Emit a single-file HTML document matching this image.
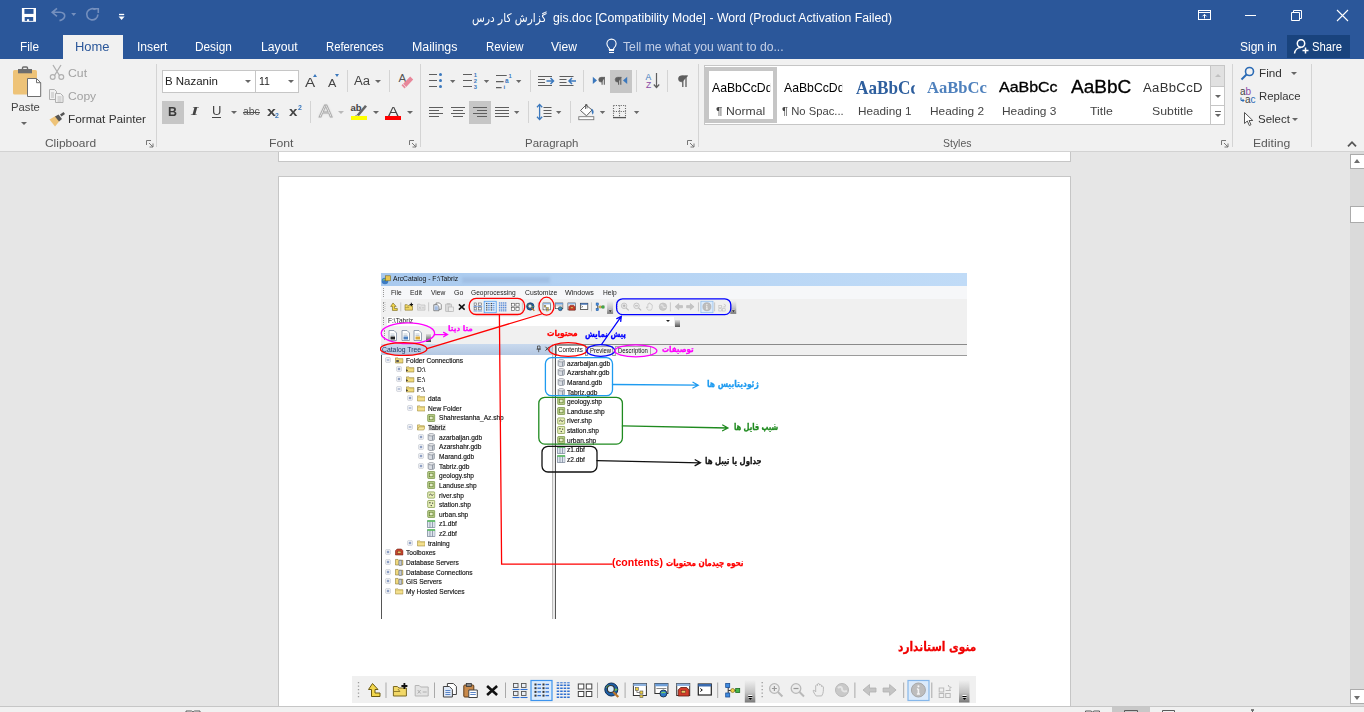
<!DOCTYPE html>
<html lang="en">
<head>
<meta charset="utf-8">
<title>gis.doc - Word</title>
<style>
*{box-sizing:border-box;margin:0;padding:0}
html,body{width:1364px;height:712px;overflow:hidden;background:#e6e6e6}
body{font-family:"Liberation Sans","DejaVu Sans",sans-serif;font-size:12px;color:#444;position:relative}
.abs,.t,.ico{position:absolute}
.t{white-space:nowrap;line-height:1}
#titlebar{position:absolute;left:0;top:0;width:1364px;height:59px;background:#2b579a}
#titlebar .t{color:#fff}
.tab{font-size:12.5px;top:41px}
#hometab{position:absolute;left:63px;top:35px;width:60px;height:25px;background:#f1f1f1}
#ribbon{position:absolute;left:0;top:59px;width:1364px;height:93px;background:#f1f1f1;border-bottom:1px solid #d2d2d2}
.vsep{position:absolute;width:1px;background:#d4d4d4}
.glabel{font-size:11.5px;color:#5a5a5a;top:138px}
.rt{font-size:12.5px;color:#444}
.dis{color:#a2a2a2}
.ac{font-size:6.8px}
.tr{color:#111;-webkit-text-stroke:.15px #111}
.fa{font-family:"DejaVu Sans",sans-serif;font-weight:bold;font-size:8px;-webkit-text-stroke:.3px currentColor}
.caret{position:absolute;width:0;height:0;border-left:3px solid transparent;border-right:3px solid transparent;border-top:3px solid #666}
#docarea{position:absolute;left:0;top:152px;width:1350px;height:554px;background:#e6e6e6;overflow:hidden}
.page{position:absolute;left:278px;width:793px;background:#fff;border:1px solid #c6c6c6}
#vscroll{position:absolute;left:1350px;top:152px;width:14px;height:554px;background:#dadada;overflow:hidden}
#status{position:absolute;left:0;top:706px;width:1364px;height:6px;background:#f1f1f1;border-top:1px solid #c6c6c6}
/*FIT*/
#title{left:553.4px!important;top:11.79px!important;font-size:12.3px!important;transform:scaleX(0.9950);transform-origin:0 0}
#tb_file{left:19.6px!important;top:40.59px!important;font-size:12.3px!important;transform:scaleX(0.9586);transform-origin:0 0}
#tb_home{left:75.4px!important;top:40.59px!important;font-size:12.3px!important;transform:scaleX(1.0516);transform-origin:0 0}
#tb_insert{left:137.2px!important;top:40.59px!important;font-size:12.3px!important;transform:scaleX(0.9851);transform-origin:0 0}
#tb_design{left:195.4px!important;top:40.59px!important;font-size:12.3px!important;transform:scaleX(0.9615);transform-origin:0 0}
#tb_layout{left:260.7px!important;top:40.59px!important;font-size:12.3px!important;transform:scaleX(0.9915);transform-origin:0 0}
#tb_ref{left:325.8px!important;top:40.59px!important;font-size:12.3px!important;transform:scaleX(0.9176);transform-origin:0 0}
#tb_mail{left:411.7px!important;top:40.59px!important;font-size:12.3px!important;transform:scaleX(1.0066);transform-origin:0 0}
#tb_review{left:485.6px!important;top:40.59px!important;font-size:12.3px!important;transform:scaleX(0.9300);transform-origin:0 0}
#tb_view{left:551.3px!important;top:40.59px!important;font-size:12.3px!important;transform:scaleX(0.9837);transform-origin:0 0}
#tb_tell{left:622.9px!important;top:40.59px!important;font-size:12.3px!important;transform:scaleX(0.9914);transform-origin:0 0}
#tb_sign{left:1240.4px!important;top:40.59px!important;font-size:12.3px!important;transform:scaleX(0.9760);transform-origin:0 0}
#tb_share{left:1312.4px!important;top:40.59px!important;font-size:12.3px!important;transform:scaleX(0.9171);transform-origin:0 0}
#t_paste{left:10.7px!important;top:102.21px!important;font-size:11.8px!important;transform:scaleX(0.9566);transform-origin:0 0}
#t_cut{left:68.2px!important;top:68.01px!important;font-size:11.8px!important;transform:scaleX(1.0383);transform-origin:0 0}
#t_copy{left:68.2px!important;top:90.81px!important;font-size:11.8px!important;transform:scaleX(1.0223);transform-origin:0 0}
#t_fp{left:68.2px!important;top:114.11px!important;font-size:11.8px!important;transform:scaleX(1.0004);transform-origin:0 0}
#t_clip{left:44.9px!important;top:138.09px!important;font-size:11px!important;transform:scaleX(1.0849);transform-origin:0 0}
#t_font{left:268.9px!important;top:138.09px!important;font-size:11px!important;transform:scaleX(1.1124);transform-origin:0 0}
#t_para{left:525.0px!important;top:138.09px!important;font-size:11px!important;transform:scaleX(1.0412);transform-origin:0 0}
#t_styles{left:943.0px!important;top:138.09px!important;font-size:11px!important;transform:scaleX(0.9507);transform-origin:0 0}
#t_edit{left:1253.0px!important;top:138.09px!important;font-size:11px!important;transform:scaleX(1.1055);transform-origin:0 0}
#t_fname{left:164.9px!important;top:76.07px!important;font-size:11.5px!important;transform:scaleX(0.9976);transform-origin:0 0}
#t_fsize{left:259.1px!important;top:76.07px!important;font-size:11.5px!important;transform:scaleX(0.9148);transform-origin:0 0}
#t_find{left:1259.1px!important;top:67.81px!important;font-size:11.8px!important;transform:scaleX(0.9917);transform-origin:0 0}
#t_repl{left:1259.1px!important;top:91.11px!important;font-size:11.8px!important;transform:scaleX(0.9599);transform-origin:0 0}
#t_sel{left:1258.4px!important;top:114.01px!important;font-size:11.8px!important;transform:scaleX(0.9715);transform-origin:0 0}
#l1{left:715.9px!important;top:106.17px!important;font-size:11.5px!important;transform:scaleX(1.0602);transform-origin:0 0}
#l2{left:781.9px!important;top:106.17px!important;font-size:11.5px!important;transform:scaleX(0.9787);transform-origin:0 0}
#l3{left:857.9px!important;top:106.17px!important;font-size:11.5px!important;transform:scaleX(1.0209);transform-origin:0 0}
#l4{left:929.9px!important;top:106.17px!important;font-size:11.5px!important;transform:scaleX(1.0324);transform-origin:0 0}
#l5{left:1001.9px!important;top:106.17px!important;font-size:11.5px!important;transform:scaleX(1.0362);transform-origin:0 0}
#l6{left:1089.8px!important;top:106.17px!important;font-size:11.5px!important;transform:scaleX(1.0667);transform-origin:0 0}
#l7{left:1152.4px!important;top:106.17px!important;font-size:11.5px!important;transform:scaleX(1.0698);transform-origin:0 0}
#s4{left:927.2px!important;top:79.98px!important;font-size:16.5px!important;transform:scaleX(1.0049);transform-origin:0 0}
#s5{left:999.0px!important;top:79.50px!important;font-size:14.3px!important;transform:scaleX(1.1169);transform-origin:0 0}
#s6{left:1071.0px!important;top:79.29px!important;font-size:17.5px!important;transform:scaleX(1.0870);transform-origin:0 0}
#s7{left:1143.2px!important;top:81.69px!important;font-size:12.3px!important;transform:scaleX(1.0662);transform-origin:0 0}
#title_fa{left:471.9px!important;top:12.05px!important;font-size:12px!important;transform:scaleX(0.8805);transform-origin:0 0}
#ac_title{left:392.9px!important;top:123.84px!important;font-size:6.8px!important;transform:scaleX(0.9921);transform-origin:0 0}
#ac_m0{left:390.8px!important;top:137.47px!important;font-size:7px!important;transform:scaleX(0.9423);transform-origin:0 0}
#ac_m1{left:410.1px!important;top:137.47px!important;font-size:7px!important;transform:scaleX(0.9807);transform-origin:0 0}
#ac_m2{left:430.6px!important;top:137.47px!important;font-size:7px!important;transform:scaleX(0.9524);transform-origin:0 0}
#ac_m3{left:453.6px!important;top:137.47px!important;font-size:7px!important;transform:scaleX(0.9985);transform-origin:0 0}
#ac_m4{left:471.4px!important;top:137.47px!important;font-size:7px!important;transform:scaleX(0.9477);transform-origin:0 0}
#ac_m5{left:524.6px!important;top:137.47px!important;font-size:7px!important;transform:scaleX(0.9744);transform-origin:0 0}
#ac_m6{left:565.4px!important;top:137.47px!important;font-size:7px!important;transform:scaleX(1.0184);transform-origin:0 0}
#ac_m7{left:602.6px!important;top:137.47px!important;font-size:7px!important;transform:scaleX(0.9461);transform-origin:0 0}
#ac_addr{left:387.7px!important;top:165.64px!important;font-size:6.8px!important;transform:scaleX(0.9635);transform-origin:0 0}
#ac_ct{left:382.2px!important;top:193.57px!important;font-size:7px!important;transform:scaleX(0.9735);transform-origin:0 0}
#ac_t1{left:558.3px!important;top:195.01px!important;font-size:6.6px!important;transform:scaleX(0.9389);transform-origin:0 0}
#ac_t2{left:589.5px!important;top:196.11px!important;font-size:6.6px!important;transform:scaleX(0.8994);transform-origin:0 0}
#ac_t3{left:617.7px!important;top:196.11px!important;font-size:6.6px!important;transform:scaleX(0.9033);transform-origin:0 0}
#tr0{left:406.1px!important;top:204.67px!important;font-size:7px!important;transform:scaleX(0.9400);transform-origin:0 0}
#tr1{left:416.9px!important;top:214.31px!important;font-size:7px!important;transform:scaleX(0.9400);transform-origin:0 0}
#tr2{left:416.9px!important;top:223.94px!important;font-size:7px!important;transform:scaleX(0.9400);transform-origin:0 0}
#tr3{left:416.9px!important;top:233.57px!important;font-size:7px!important;transform:scaleX(0.9400);transform-origin:0 0}
#tr4{left:427.8px!important;top:243.21px!important;font-size:7px!important;transform:scaleX(0.9400);transform-origin:0 0}
#tr5{left:427.8px!important;top:252.84px!important;font-size:7px!important;transform:scaleX(0.9400);transform-origin:0 0}
#tr6{left:438.5px!important;top:262.47px!important;font-size:7px!important;transform:scaleX(0.9400);transform-origin:0 0}
#tr7{left:427.8px!important;top:272.11px!important;font-size:7px!important;transform:scaleX(0.9400);transform-origin:0 0}
#tr8{left:438.5px!important;top:281.74px!important;font-size:7px!important;transform:scaleX(0.9400);transform-origin:0 0}
#tr9{left:438.5px!important;top:291.37px!important;font-size:7px!important;transform:scaleX(0.9400);transform-origin:0 0}
#tr10{left:438.5px!important;top:301.00px!important;font-size:7px!important;transform:scaleX(0.9400);transform-origin:0 0}
#tr11{left:438.5px!important;top:310.64px!important;font-size:7px!important;transform:scaleX(0.9400);transform-origin:0 0}
#tr12{left:438.5px!important;top:320.27px!important;font-size:7px!important;transform:scaleX(0.9400);transform-origin:0 0}
#tr13{left:438.5px!important;top:329.90px!important;font-size:7px!important;transform:scaleX(0.9400);transform-origin:0 0}
#tr14{left:438.5px!important;top:339.54px!important;font-size:7px!important;transform:scaleX(0.9400);transform-origin:0 0}
#tr15{left:438.5px!important;top:349.17px!important;font-size:7px!important;transform:scaleX(0.9400);transform-origin:0 0}
#tr16{left:438.5px!important;top:358.80px!important;font-size:7px!important;transform:scaleX(0.9400);transform-origin:0 0}
#tr17{left:438.5px!important;top:368.44px!important;font-size:7px!important;transform:scaleX(0.9400);transform-origin:0 0}
#tr18{left:438.5px!important;top:378.07px!important;font-size:7px!important;transform:scaleX(0.9400);transform-origin:0 0}
#tr19{left:427.8px!important;top:387.70px!important;font-size:7px!important;transform:scaleX(0.9400);transform-origin:0 0}
#tr20{left:406.1px!important;top:397.33px!important;font-size:7px!important;transform:scaleX(0.9400);transform-origin:0 0}
#tr21{left:406.1px!important;top:406.97px!important;font-size:7px!important;transform:scaleX(0.9400);transform-origin:0 0}
#tr22{left:406.1px!important;top:416.60px!important;font-size:7px!important;transform:scaleX(0.9400);transform-origin:0 0}
#tr23{left:406.1px!important;top:426.23px!important;font-size:7px!important;transform:scaleX(0.9400);transform-origin:0 0}
#tr24{left:406.1px!important;top:435.87px!important;font-size:7px!important;transform:scaleX(0.9400);transform-origin:0 0}
#ls0{left:566.6px!important;top:207.67px!important;font-size:7px!important;transform:scaleX(0.9400);transform-origin:0 0}
#ls1{left:566.6px!important;top:217.31px!important;font-size:7px!important;transform:scaleX(0.9400);transform-origin:0 0}
#ls2{left:566.6px!important;top:226.94px!important;font-size:7px!important;transform:scaleX(0.9400);transform-origin:0 0}
#ls3{left:566.6px!important;top:236.57px!important;font-size:7px!important;transform:scaleX(0.9400);transform-origin:0 0}
#ls4{left:566.6px!important;top:246.21px!important;font-size:7px!important;transform:scaleX(0.9400);transform-origin:0 0}
#ls5{left:566.6px!important;top:255.84px!important;font-size:7px!important;transform:scaleX(0.9400);transform-origin:0 0}
#ls6{left:566.6px!important;top:265.47px!important;font-size:7px!important;transform:scaleX(0.9400);transform-origin:0 0}
#ls7{left:566.6px!important;top:275.11px!important;font-size:7px!important;transform:scaleX(0.9400);transform-origin:0 0}
#ls8{left:566.6px!important;top:284.74px!important;font-size:7px!important;transform:scaleX(0.9400);transform-origin:0 0}
#ls9{left:566.6px!important;top:294.37px!important;font-size:7px!important;transform:scaleX(0.9400);transform-origin:0 0}
#ls10{left:566.6px!important;top:304.00px!important;font-size:7px!important;transform:scaleX(0.9400);transform-origin:0 0}
#an_meta{left:448.0px!important;top:173.35px!important;font-size:7.5px!important;transform:scaleX(0.9684);transform-origin:0 0}
#an_moh{left:546.6px!important;top:178.43px!important;font-size:8px!important;transform:scaleX(0.9296);transform-origin:0 0}
#an_pish{left:585.0px!important;top:178.01px!important;font-size:8.5px!important;transform:scaleX(0.8391);transform-origin:0 0}
#an_tos{left:661.6px!important;top:194.23px!important;font-size:8px!important;transform:scaleX(0.8853);transform-origin:0 0}
#an_geo{left:706.5px!important;top:228.39px!important;font-size:9px!important;transform:scaleX(0.8384);transform-origin:0 0}
#an_shp{left:733.5px!important;top:270.79px!important;font-size:9px!important;transform:scaleX(0.7541);transform-origin:0 0}
#an_jad{left:704.8px!important;top:305.39px!important;font-size:9px!important;transform:scaleX(0.7771);transform-origin:0 0}
#an_nah{left:665.8px!important;top:406.79px!important;font-size:9px!important;transform:scaleX(0.8052);transform-origin:0 0}
#an_cont{left:611.5px!important;top:405.88px!important;font-size:10.3px!important;transform:scaleX(1.0233);transform-origin:0 0}
#an_head{left:898.1px!important;top:489.42px!important;font-size:12.5px!important;transform:scaleX(0.8441);transform-origin:0 0}
#f_growA{left:304.7px!important;top:75.96px!important;font-size:13.4px!important;transform:scaleX(1.1419);transform-origin:0 0}
#f_shrA{left:327.8px!important;top:78.41px!important;font-size:10.5px!important;transform:scaleX(1.1895);transform-origin:0 0}
#f_Aa{left:354.4px!important;top:74.84px!important;font-size:12px!important;transform:scaleX(1.0948);transform-origin:0 0}
#f_fx{left:319.2px!important;top:103.75px!important;font-size:16.6px!important;transform:scaleX(1.2000);transform-origin:0 0}
#f_colA{left:387.9px!important;top:105.06px!important;font-size:13.4px!important;transform:scaleX(1.1867);transform-origin:0 0}
#f_B{left:167.8px!important;top:105.64px!important;font-size:12px!important;transform:scaleX(1.0355);transform-origin:0 0}
#f_I{left:190.7px!important;top:104.49px!important;font-size:13.5px!important;transform:scaleX(1.4082);transform-origin:0 0}
#f_U{left:211.8px!important;top:105.22px!important;font-size:12.5px!important;transform:scaleX(1.0436);transform-origin:0 0}
#f_abc{left:242.6px!important;top:106.32px!important;font-size:11.2px!important;transform:scaleX(0.9314);transform-origin:0 0}
#f_x1{left:266.5px!important;top:104.80px!important;font-size:13px!important;transform:scaleX(1.2261);transform-origin:0 0}
#f_x2{left:288.5px!important;top:104.80px!important;font-size:13px!important;transform:scaleX(1.1570);transform-origin:0 0}
#f_sub2{left:275.4px!important;top:113.10px!important;font-size:6.5px!important;transform:scaleX(1.0717);transform-origin:0 0}
#f_sup2{left:297.6px!important;top:105.20px!important;font-size:6.5px!important;transform:scaleX(1.0717);transform-origin:0 0}
/*ENDFIT*/
</style>
</head>
<body>
<!-- TITLE BAR -->
<div id="titlebar">
  <div class="t" id="title_fa" dir="rtl" style="left:472px;top:10px;font-size:12px;font-family:'DejaVu Sans',sans-serif">گزارش کار درس</div>
  <div class="t" id="title" style="left:554px;top:10px;font-size:13px">gis.doc [Compatibility Mode] - Word (Product Activation Failed)</div>

  <div class="abs" style="left:1287px;top:35px;width:63px;height:23px;background:#19437d"></div>
  <!-- QAT icons -->
  <svg class="ico" style="left:20px;top:6px" width="110" height="18" viewBox="20 6 110 18" fill="none">
    <rect x="21.900" y="8" width="14.100" height="13.800" fill="#fff"/><rect x="24.400" y="9" width="9.100" height="4.900" fill="#2b579a"/><rect x="24.700" y="17" width="8.500" height="3.900" fill="#2b579a"/><rect x="27" y="19.200" width="2.100" height="2" fill="#fff"/>
    <path d="M57 8.300L52.200 12.300L57 16.300M52.500 12.300H60C63.500 12.300 65.200 14.500 64.600 16.700C64 18.800 62 20 59.500 20.600" stroke="#7590be" stroke-width="1.600"/>
    <path d="M71.200 13h5l-2.500 2.900z" fill="#7590be"/>
    <path d="M95.500 9.700A5.600 5.600 0 1 0 97.900 14.500" stroke="#7590be" stroke-width="1.600"/><path d="M93 8.800H98.300V13" stroke="#7590be" stroke-width="1.600"/>
    <path d="M119 14.500h5.200" stroke="#fff" stroke-width="1.300"/><path d="M118.600 16.600h6l-3 3.400z" fill="#fff"/>
  </svg>
  <!-- window controls -->
  <svg class="ico" style="left:1197px;top:8px" width="15" height="13" viewBox="0 0 15 13"><rect x="1.500" y="2.500" width="12" height="9" fill="none" stroke="#fff" stroke-width="1"/><path d="M1.500 4.500h12" stroke="#fff" stroke-width="1"/><path d="M7.500 10.500V6.500M5.500 8.300l2-2 2 2" fill="none" stroke="#fff" stroke-width="1"/></svg>
  <div class="abs" style="left:1245px;top:15px;width:11px;height:1px;background:#fff"></div>
  <svg class="ico" style="left:1290px;top:9px" width="13" height="13" viewBox="0 0 13 13"><path d="M1.5 3.5h8v8h-8z" fill="none" stroke="#fff" stroke-width="1"/><path d="M3.5 3.5v-2h8v8h-2" fill="none" stroke="#fff" stroke-width="1"/></svg>
  <svg class="ico" style="left:1336px;top:9px" width="13" height="13" viewBox="0 0 13 13"><path d="M1 1l11 11M12 1L1 12" fill="none" stroke="#fff" stroke-width="1.1"/></svg>
  <!-- lightbulb + share icon -->
  <svg class="ico" style="left:605px;top:37px" width="13" height="17" viewBox="605 37 13 17" fill="none"><path d="M609.300 49.500v-1.200c-1.500-1.300-2.400-2.700-2.400-4.600a4.600 4.600 0 0 1 9.200 0c0 1.900-.9 3.300-2.400 4.600v1.200z" stroke="#fff" stroke-width="1.100"/><rect x="609" y="49" width="5" height="2" fill="#fff"/><path d="M609 52.500h5" stroke="#fff" stroke-width="1.100"/></svg>
  <svg class="ico" style="left:1293px;top:38px" width="17" height="17" viewBox="0 0 17 17"><circle cx="8" cy="5.500" r="3.700" fill="none" stroke="#fff" stroke-width="1.500"/><path d="M1.500 15.500c.5-4 3.500-6 6.500-6" fill="none" stroke="#fff" stroke-width="1.500"/><path d="M9.500 12.500h6M12.500 9.500v6" stroke="#fff" stroke-width="1.500"/></svg>
  <div class="t tab" id="tb_file" style="left:20px">File</div>
  <div id="hometab"></div>
  <div class="t tab" id="tb_home" style="left:76px;color:#2b579a">Home</div>
  <div class="t tab" id="tb_insert" style="left:138px">Insert</div>
  <div class="t tab" id="tb_design" style="left:196px">Design</div>
  <div class="t tab" id="tb_layout" style="left:261px">Layout</div>
  <div class="t tab" id="tb_ref" style="left:326px">References</div>
  <div class="t tab" id="tb_mail" style="left:412px">Mailings</div>
  <div class="t tab" id="tb_review" style="left:486px">Review</div>
  <div class="t tab" id="tb_view" style="left:552px">View</div>
  <div class="t tab" id="tb_tell" style="left:623px;color:#c2cee5">Tell me what you want to do...</div>
  <div class="t tab" id="tb_sign" style="left:1240px">Sign in</div>
  <div class="t tab" id="tb_share" style="left:1312px">Share</div>
</div>
<!-- RIBBON -->
<div id="ribbon"></div>
<!-- ===== Clipboard group ===== -->
<svg class="ico" style="left:12px;top:66px" width="30" height="32" viewBox="0 0 30 32">
  <rect x="1" y="4" width="24" height="24.500" rx="1.500" fill="#eec378"/>
  <rect x="6" y="3" width="14" height="4.300" fill="#6e6e6e"/><rect x="10.500" y="1" width="5" height="4" rx="1" fill="none" stroke="#6e6e6e" stroke-width="1.400"/>
  <path d="M15.500 12.500h9l4.200 4.200v13.800h-13.200z" fill="#fff" stroke="#6e6e6e" stroke-width="1"/><path d="M24.500 12.500v4.200h4.200" fill="none" stroke="#6e6e6e" stroke-width="1"/>
</svg>
<div class="t rt" id="t_paste" style="left:11px;top:102px">Paste</div>
<div class="caret" style="left:21px;top:122px"></div>
<svg class="ico" style="left:49px;top:64px" width="16" height="17" viewBox="0 0 16 17"><path d="M4 1l6.500 10.500M12 1L5.500 11.500" stroke="#b0b0b0" stroke-width="1.300" fill="none"/><circle cx="3.700" cy="13" r="2.400" fill="none" stroke="#b0b0b0" stroke-width="1.200"/><circle cx="12.300" cy="13" r="2.400" fill="none" stroke="#b0b0b0" stroke-width="1.200"/></svg>
<div class="t rt dis" id="t_cut" style="left:68px;top:68px">Cut</div>
<svg class="ico" style="left:48px;top:88px" width="17" height="16" viewBox="0 0 17 16"><path d="M1.500 1.500h5l2 2v8h-7z" fill="#f1f1f1" stroke="#b0b0b0" stroke-width="1"/><path d="M3 5h3M3 7h3M3 9h3" stroke="#b0b0b0" stroke-width=".8"/><path d="M7.500 5.500h5l2.500 2.500v6.500h-7.500z" fill="#f1f1f1" stroke="#b0b0b0" stroke-width="1"/><path d="M9.500 9h4M9.500 11h4M9.500 13h4" stroke="#b0b0b0" stroke-width=".8"/></svg>
<div class="t rt dis" id="t_copy" style="left:68px;top:91px">Copy</div>
<svg class="ico" style="left:48px;top:111px" width="18" height="16" viewBox="0 0 18 16"><path d="M1.500 8.500l6-3.500 4 5-4.500 5.500z" fill="#eec378"/><path d="M7 5.500l3.500-2 3.500 4.500-3 2.500z" fill="#555"/><path d="M12 3.500l3.500-2.500 1.500 2-3.500 2.500z" fill="#555"/></svg>
<div class="t rt" id="t_fp" style="left:68px;top:114px;color:#333">Format Painter</div>
<div class="t glabel" id="t_clip" style="left:45px">Clipboard</div>
<svg class="ico launcher" style="left:146px;top:140px" width="8" height="8" viewBox="0 0 8 8"><path d="M.500 5V.500H5" fill="none" stroke="#777" stroke-width="1"/><path d="M3 3l4 4M7 3.500V7H3.500" fill="none" stroke="#777" stroke-width="1"/></svg>
<div class="vsep" style="left:156px;top:64px;height:83px"></div>

<!-- ===== Font group ===== -->
<div class="abs" style="left:162px;top:70px;width:94px;height:23px;background:#fff;border:1px solid #c6c6c6"></div>
<div class="abs" style="left:255px;top:70px;width:44px;height:23px;background:#fff;border:1px solid #c6c6c6"></div>
<div class="t rt" id="t_fname" style="left:165px;top:75px;color:#222">B Nazanin</div>
<div class="caret" style="left:245px;top:80px"></div>
<div class="t rt" id="t_fsize" style="left:259px;top:75px;color:#222">11</div>
<div class="caret" style="left:288px;top:80px"></div>
<div class="t" id="f_growA" style="color:#444">A</div>
<div class="abs" style="left:313px;top:74px;width:0;height:0;border-left:2.600px solid transparent;border-right:2.600px solid transparent;border-bottom:3px solid #3b78bd"></div>
<div class="t" id="f_shrA" style="color:#444">A</div>
<div class="abs" style="left:335px;top:74px;width:0;height:0;border-left:2.600px solid transparent;border-right:2.600px solid transparent;border-top:3px solid #3b78bd"></div>
<div class="vsep" style="left:347px;top:70px;height:22px"></div>
<div class="t" id="f_Aa" style="color:#444">Aa</div>
<div class="caret" style="left:374.500px;top:80px"></div>
<div class="vsep" style="left:389px;top:70px;height:22px"></div>
<svg class="ico" style="left:397px;top:71px" width="18" height="19" viewBox="0 0 18 19"><text x="1.500" y="11" font-size="11.500" font-family="Liberation Sans" fill="#555">A</text><path d="M6.200 12.700l7-7.300 3 3.200-7 7.300z" fill="#e8879a"/><path d="M4.500 14.300l1.200-1.200 3 3.200-1.200 1.200z" fill="#e8879a"/></svg>

<div class="abs" style="left:162px;top:101px;width:22px;height:23px;background:#c6c6c6"></div>
<div class="t" id="f_B" style="font-weight:bold;color:#3a3a3a">B</div>
<div class="t" id="f_I" style="font-style:italic;font-weight:bold;font-family:'Liberation Serif',serif;color:#444">I</div>
<div class="t" id="f_U" style="color:#444">U</div>
<div class="abs" style="left:212px;top:117px;width:9px;height:1.200px;background:#444"></div>
<div class="caret" style="left:230.600px;top:111px"></div>
<div class="t" id="f_abc" style="color:#555">abc</div>
<div class="abs" style="left:242.500px;top:112px;width:17.500px;height:1px;background:#555"></div>
<div class="t" id="f_x1" style="font-weight:bold;color:#444">x</div><div class="t" id="f_sub2" style="font-weight:bold;color:#3b78bd">2</div>
<div class="t" id="f_x2" style="font-weight:bold;color:#444">x</div><div class="t" id="f_sup2" style="font-weight:bold;color:#3b78bd">2</div>
<div class="vsep" style="left:310px;top:101px;height:22px"></div>
<div class="t" id="f_fx" style="color:#fff;-webkit-text-stroke:.8px #aaa;text-shadow:0 0 2px #c4c4c4">A</div>
<div class="caret" style="left:337.500px;top:111px;border-top-color:#b9b9b9"></div>
<svg class="ico" style="left:350px;top:103px" width="19" height="18" viewBox="0 0 19 18"><text x="0.500" y="8.200" font-size="9.500" font-weight="bold" font-family="Liberation Sans" fill="#444">ab</text><path d="M15 2l2 1.500-8 9.500-2.500-1z" fill="#666"/><path d="M6 12l-1.500 2 3-.5z" fill="#666"/><rect x="1" y="13" width="16" height="4" fill="#ffff00"/></svg>
<div class="caret" style="left:372.500px;top:111px"></div>
<div class="t" id="f_colA" style="color:#444">A</div>
<div class="abs" style="left:385px;top:116px;width:16px;height:4px;background:#ff0000"></div>
<div class="caret" style="left:406.500px;top:111px"></div>
<div class="t glabel" id="t_font" style="left:269px">Font</div>
<svg class="ico launcher" style="left:409px;top:140px" width="8" height="8" viewBox="0 0 8 8"><path d="M.500 5V.500H5" fill="none" stroke="#777" stroke-width="1"/><path d="M3 3l4 4M7 3.500V7H3.500" fill="none" stroke="#777" stroke-width="1"/></svg>
<div class="vsep" style="left:420px;top:64px;height:83px"></div>

<!-- ===== Paragraph group ===== -->
<div class="abs" style="left:610px;top:70px;width:22px;height:23px;background:#c6c6c6"></div>
<div class="abs" style="left:469px;top:101px;width:22px;height:23px;background:#c6c6c6"></div>
<svg class="ico" style="left:420px;top:64px" width="280" height="64" viewBox="420 64 280 64" fill="none">
<path d="M429 74.500h8M429 80.500h8M429 86.500h8" stroke="#5e5e5e" stroke-width="1.200"/><circle cx="440.500" cy="74.500" r="1.500" fill="#3b78bd"/><circle cx="440.500" cy="80.500" r="1.500" fill="#3b78bd"/><circle cx="440.500" cy="86.500" r="1.500" fill="#3b78bd"/>
<path d="M450 80h5.400l-2.700 3z" fill="#6a6a6a"/>
<path d="M463 74.500h9M463 80.500h9M463 86.500h9" stroke="#5e5e5e" stroke-width="1.200"/>
<text x="473.700" y="77" font-size="5.800" font-weight="bold" font-family="Liberation Sans" fill="#3b78bd">1</text><text x="473.700" y="83" font-size="5.800" font-weight="bold" font-family="Liberation Sans" fill="#3b78bd">2</text><text x="473.700" y="89" font-size="5.800" font-weight="bold" font-family="Liberation Sans" fill="#3b78bd">3</text>
<path d="M483.8 80h5.400l-2.700 3z" fill="#6a6a6a"/>
<path d="M496 75.500h10.700M496 81.600h7.600M496 87.600h5.600" stroke="#5e5e5e" stroke-width="1.200"/>
<text x="508.600" y="77.500" font-size="5.800" font-weight="bold" font-family="Liberation Sans" fill="#3b78bd">1</text><text x="505" y="83.300" font-size="6.500" font-weight="bold" font-family="Liberation Sans" fill="#3b78bd">a</text><text x="503.600" y="89.300" font-size="6" font-weight="bold" font-family="Liberation Sans" fill="#3b78bd">i</text>
<path d="M516 80h5.400l-2.700 3z" fill="#6a6a6a"/>
<path d="M530.500 70V92" stroke="#d4d4d4"/>
<path d="M538 76.500h14M538 79.500h7M538 82.500h7M538 85.500h14" stroke="#5e5e5e" stroke-width="1.200"/><path d="M546.500 81h7M550.500 78l3 3-3 3" stroke="#3b78bd" stroke-width="1.500"/>
<path d="M559.500 76.500h14M559.500 79.500h7M559.500 82.500h7M559.500 85.500h14" stroke="#5e5e5e" stroke-width="1.200"/><path d="M576 81h-7M572 78l-3 3 3 3" stroke="#3b78bd" stroke-width="1.500"/>
<path d="M583.500 70V92" stroke="#d4d4d4"/>
<path d="M592.800 76.800l4.200 3.600-4.200 3.600z" fill="#3b78bd"/><path d="M605.0 77.3H601.1a2.400 2.400 0 0 0 0 4.800H601.9" fill="#5e5e5e" stroke="#5e5e5e" stroke-width=".6"/><path d="M602.1 77.3V84.7M604.3 77.3V84.7" stroke="#5e5e5e" stroke-width="1.100"/>
<path d="M621.5 77.3H617.6a2.400 2.400 0 0 0 0 4.800H618.4" fill="#5e5e5e" stroke="#5e5e5e" stroke-width=".6"/><path d="M618.6 77.3V84.7M620.8 77.3V84.7" stroke="#5e5e5e" stroke-width="1.100"/><path d="M627.200 76.800l-4.200 3.600 4.200 3.600z" fill="#3b78bd"/>
<path d="M636.500 70V92" stroke="#d4d4d4"/>
<text x="645.600" y="79.500" font-size="8.600" font-family="Liberation Sans" fill="#3b78bd">A</text><text x="645.900" y="87.800" font-size="8.600" font-family="Liberation Sans" fill="#8a4aa5">Z</text>
<path d="M656.500 73V87.500M653.800 84.500l2.700 3 2.700-3" stroke="#5e5e5e" stroke-width="1.200"/>
<path d="M667.500 70V92" stroke="#d4d4d4"/>
<path d="M688 75.800H681.500a3 3 0 0 0 0 6H682.500" fill="#5e5e5e" stroke="#5e5e5e" stroke-width=".7"/><path d="M682.800 75.800V87M686 75.800V87" stroke="#5e5e5e" stroke-width="1.300"/>

<path d="M429 107.500h14M429 110.500h10M429 113.500h14M429 116.500h10" stroke="#5e5e5e" stroke-width="1.200"/>
<path d="M451 107.500h14M453 110.500h10M451 113.500h14M453 116.500h10" stroke="#5e5e5e" stroke-width="1.200"/>
<path d="M473 107.500h14M477 110.500h10M473 113.500h14M477 116.500h10" stroke="#5e5e5e" stroke-width="1.200"/>
<path d="M495 107.500h14M495 110.500h14M495 113.500h14M495 116.500h14" stroke="#5e5e5e" stroke-width="1.200"/>
<path d="M514 111h5.400l-2.700 3z" fill="#6a6a6a"/>
<path d="M528.500 101V123" stroke="#d4d4d4"/>
<path d="M539.600 104.500V119.500M537 107.200l2.600-2.800 2.600 2.800M537 116.800l2.600 2.800 2.600-2.800" stroke="#3b78bd" stroke-width="1.300"/>
<path d="M543.500 107.500h8M543.500 110.500h8M543.500 113.500h8M543.500 116.500h8" stroke="#5e5e5e" stroke-width="1.200"/>
<path d="M556 111h5.400l-2.700 3z" fill="#6a6a6a"/>
<path d="M570.500 101V123" stroke="#d4d4d4"/>
<path d="M580.500 110.500l5.500-5.500 6 5-5.500 5.800z" fill="#fff" stroke="#5e5e5e" stroke-width="1"/><path d="M585.500 109v-4.500h1.500v4" stroke="#5e5e5e" stroke-width=".9"/><path d="M591.500 108.500c2.200 1 2.800 3.500 1.300 6.300-1-1.800-1.500-3.800-1.300-6.300z" fill="#3b78bd"/>
<rect x="578.800" y="116.700" width="15" height="3" fill="#fff" stroke="#777" stroke-width=".9"/>
<path d="M599.8 111h5.400l-2.700 3z" fill="#6a6a6a"/>
<path d="M613.500 105.500h12.500M613.500 111.500h12.500M613.500 105.500v12M619.500 105.500v12M625.500 105.500v12" stroke="#666" stroke-width="1.100" stroke-dasharray="1.100 1.300"/><path d="M613 117.600h13" stroke="#555" stroke-width="1.300"/>
<path d="M633.9 111h5.400l-2.700 3z" fill="#6a6a6a"/>
</svg>
<div class="t glabel" id="t_para" style="left:525px">Paragraph</div>
<svg class="ico launcher" style="left:687px;top:140px" width="8" height="8" viewBox="0 0 8 8"><path d="M.500 5V.500H5" fill="none" stroke="#777" stroke-width="1"/><path d="M3 3l4 4M7 3.500V7H3.500" fill="none" stroke="#777" stroke-width="1"/></svg>
<div class="vsep" style="left:698px;top:64px;height:83px"></div>

<!-- ===== Styles group ===== -->
<div class="abs" style="left:704px;top:65px;width:521px;height:60px;background:#fff;border:1px solid #c6c6c6"></div>
<div class="abs" style="left:705px;top:67px;width:72px;height:56px;border:4px solid #c6c6c6;background:#fff"></div>
<div class="t sty" id="s1" style="left:711.9px;top:81.77px;font-size:12.2px;color:#000;width:58.3px;height:16px;overflow:hidden;transform:scaleX(1.003);transform-origin:0 0">AaBbCcDdEe</div>
<div class="t sty" id="s2" style="left:783.8px;top:81.77px;font-size:12.2px;color:#000;width:58.3px;height:16px;overflow:hidden;transform:scaleX(1.003);transform-origin:0 0">AaBbCcDdEe</div>
<div class="t sty" id="s3" style="left:855.7px;top:78.19px;font-size:19px;font-weight:bold;color:#2e5f9e;font-family:'Liberation Serif',serif;width:64.8px;height:24px;overflow:hidden;transform:scaleX(0.9038);transform-origin:0 0">AaBbCcD</div>
<div class="t sty" id="s4" style="left:927px;top:79px;font-size:16.500px;font-weight:bold;color:#4f81bd;font-family:'Liberation Serif',serif;width:63px;overflow:hidden">AaBbCc</div>
<div class="t sty" id="s5" style="left:999px;top:78px;font-size:15.500px;color:#000;-webkit-text-stroke:.3px #000">AaBbCc</div>
<div class="t sty" id="s6" style="left:1071px;top:76px;font-size:19px;color:#000;-webkit-text-stroke:.3px #000">AaBbC</div>
<div class="t sty" id="s7" style="left:1143px;top:79px;font-size:14.500px;color:#333;letter-spacing:.3px">AaBbCcD</div>
<div class="t rt lab" id="l1" style="left:716px;top:105px">¶ Normal</div>
<div class="t rt lab" id="l2" style="left:781px;top:105px">¶ No Spac...</div>
<div class="t rt lab" id="l3" style="left:857px;top:105px">Heading 1</div>
<div class="t rt lab" id="l4" style="left:929px;top:105px">Heading 2</div>
<div class="t rt lab" id="l5" style="left:1001px;top:105px">Heading 3</div>
<div class="t rt lab" id="l6" style="left:1089px;top:105px">Title</div>
<div class="t rt lab" id="l7" style="left:1152px;top:105px">Subtitle</div>
<div class="abs" style="left:1210px;top:66px;width:14px;height:58px;background:#fff;border-left:1px solid #c6c6c6"></div>
<div class="abs" style="left:1210px;top:66px;width:14px;height:21px;background:#e1e1e1;border-left:1px solid #c6c6c6;border-bottom:1px solid #c6c6c6"></div>
<div class="abs" style="left:1210px;top:105px;width:14px;height:1px;background:#c6c6c6"></div>
<div class="abs" style="left:1215px;top:74px;width:0;height:0;border-left:3px solid transparent;border-right:3px solid transparent;border-bottom:3px solid #c0c0c0"></div>
<div class="caret" style="left:1215px;top:95px"></div>
<div class="abs" style="left:1215px;top:111px;width:6px;height:1px;background:#666"></div>
<div class="caret" style="left:1215px;top:114px"></div>
<div class="t glabel" id="t_styles" style="left:943px">Styles</div>
<svg class="ico launcher" style="left:1221px;top:140px" width="8" height="8" viewBox="0 0 8 8"><path d="M.500 5V.500H5" fill="none" stroke="#777" stroke-width="1"/><path d="M3 3l4 4M7 3.500V7H3.500" fill="none" stroke="#777" stroke-width="1"/></svg>
<div class="vsep" style="left:1232px;top:64px;height:83px"></div>

<!-- ===== Editing group ===== -->
<svg class="ico" style="left:1240px;top:66px" width="16" height="16" viewBox="0 0 16 16"><circle cx="9.500" cy="5.500" r="4" fill="none" stroke="#2b6bb5" stroke-width="1.600"/><path d="M6.500 8.500L1.500 13.500" stroke="#2b6bb5" stroke-width="2"/></svg>
<div class="t rt" id="t_find" style="left:1259px;top:68px;color:#333">Find</div>
<div class="caret" style="left:1291px;top:72px"></div>
<svg class="ico" style="left:1239px;top:87px" width="19" height="18" viewBox="0 0 19 18"><text x="1" y="8" font-size="10" font-family="Liberation Sans" fill="#444">a</text><text x="6.500" y="8" font-size="10" font-family="Liberation Sans" fill="#8a4aa5">b</text><text x="6" y="16" font-size="10" font-family="Liberation Sans" fill="#444">a</text><text x="11.500" y="16" font-size="10" font-family="Liberation Sans" fill="#2b6bb5">c</text><path d="M2 10.500v3h3M3.500 12l1.500 1.500-1.500 1.500" stroke="#2b6bb5" stroke-width="1" fill="none"/></svg>
<div class="t rt" id="t_repl" style="left:1259px;top:91px;color:#333">Replace</div>
<svg class="ico" style="left:1243px;top:111px" width="12" height="16" viewBox="0 0 12 16"><path d="M1.500 1.500v11l2.800-2.500 2 4.500 1.700-.800-2-4.200h3.800z" fill="#fff" stroke="#555" stroke-width="1"/></svg>
<div class="t rt" id="t_sel" style="left:1259px;top:114px;color:#333">Select</div>
<div class="caret" style="left:1292px;top:118px"></div>
<div class="t glabel" id="t_edit" style="left:1253px">Editing</div>
<div class="vsep" style="left:1311px;top:64px;height:83px"></div>
<svg class="ico" style="left:1345.500px;top:138.500px" width="12" height="9" viewBox="0 0 12 9"><path d="M2 7.300L6 3.200 10 7.300" fill="none" stroke="#555" stroke-width="1.800"/></svg>
<!-- DOC -->
<div id="docarea">
  <div class="page" style="top:-20px;height:30px"></div>
  <div class="page" id="page2" style="top:24px;height:600px"></div>
<!--DOC-->
<svg width="0" height="0" style="position:absolute"><defs>
<symbol id="i-fold" viewBox="0 0 10 8"><path d="M.5 1.500h3l1 1h5v5h-9z" fill="#f3df8d" stroke="#a08a3a" stroke-width=".7"/><path d="M.5 3.300h9" stroke="#c9b45a" stroke-width=".5"/></symbol>
<symbol id="i-foldc" viewBox="0 0 10 8"><path d="M.5 1.500h3l1 1h5v5h-9z" fill="#efd87c" stroke="#8c7a33" stroke-width=".7"/><rect x="1.500" y="4" width="3" height="2.500" fill="#555"/></symbol>
<symbol id="i-foldo" viewBox="0 0 10 8"><path d="M.5 7.500v-6h3l1 1h4v1.500" fill="#f3df8d" stroke="#a08a3a" stroke-width=".7"/><path d="M.5 7.500l1.800-3.700h7.400l-1.800 3.700z" fill="#f8e9a6" stroke="#a08a3a" stroke-width=".7"/></symbol>
<symbol id="i-gdb" viewBox="0 0 9 9"><path d="M1 2v5.200c0 .8 1.600 1.300 3.500 1.300s3.500-.5 3.500-1.300v-5.200" fill="#d9dde3" stroke="#6d7480" stroke-width=".7"/><ellipse cx="4.500" cy="2" rx="3.500" ry="1.300" fill="#f4f5f7" stroke="#6d7480" stroke-width=".7"/><path d="M6 3.500v4.500" stroke="#8d95a3" stroke-width="1.200"/></symbol>
<symbol id="i-shp" viewBox="0 0 9 9"><rect x=".5" y=".5" width="8" height="8" rx="1" fill="#b9cf8a" stroke="#6f8a3c" stroke-width=".8"/><rect x="2.500" y="2.500" width="4" height="4" fill="#e3ecc8" stroke="#5f7a2c" stroke-width=".7"/></symbol>
<symbol id="i-line" viewBox="0 0 9 9"><rect x=".5" y="1" width="8" height="7" rx="1" fill="#e6eeb8" stroke="#7c9440" stroke-width=".8"/><path d="M2 5l1.500-1.500 2 1.500 1.500-1" fill="none" stroke="#333" stroke-width=".9"/></symbol>
<symbol id="i-pt" viewBox="0 0 9 9"><rect x=".5" y=".5" width="8" height="8" rx="1" fill="#e6eeb8" stroke="#7c9440" stroke-width=".8"/><circle cx="3" cy="3" r=".8" fill="#333"/><circle cx="6" cy="3.500" r=".8" fill="#333"/><circle cx="4.500" cy="6.300" r=".8" fill="#333"/></symbol>
<symbol id="i-dbf" viewBox="0 0 10 9"><rect x=".5" y=".8" width="9" height="7.700" fill="#dfe6ee" stroke="#5f6e85" stroke-width=".7"/><rect x=".5" y=".3" width="9" height="1.400" fill="#35c135"/><path d="M3.500 1.700v6.800M6.500 1.700v6.800" stroke="#5f6e85" stroke-width=".7"/></symbol>
<symbol id="i-tbx" viewBox="0 0 10 9"><path d="M.5 3l2-2h5l2 2v5h-9z" fill="#c9452f" stroke="#6e2418" stroke-width=".7"/><rect x="3" y="3.500" width="4" height="2.500" fill="#e8c86a" stroke="#6e2418" stroke-width=".5"/></symbol>
<symbol id="i-srv" viewBox="0 0 10 9"><path d="M.5 1.500h3l1 1h5v5.500h-9z" fill="#efd87c" stroke="#8c7a33" stroke-width=".7"/><rect x="4.500" y="2.500" width="3.500" height="6" rx=".8" fill="#c5ccd6" stroke="#596172" stroke-width=".7"/></symbol>
<symbol id="i-drv" viewBox="0 0 10 8"><path d="M.5 1.500h3l1 1h5v5h-9z" fill="#f0da7c" stroke="#8c7a33" stroke-width=".7"/><path d="M.5 3.300h9" stroke="#c9b45a" stroke-width=".5"/><path d="M.3 4.200l2.200 1.300-2.200 1.300z" fill="#222"/></symbol>
<symbol id="i-plus" viewBox="0 0 7 7"><rect x=".8" y=".8" width="5.400" height="5.400" rx=".6" fill="#fbfbfc" stroke="#b3bac6" stroke-width=".7"/><path d="M2 3.500h3M3.500 2v3" stroke="#3b5b9b" stroke-width=".8"/></symbol>
<symbol id="i-minus" viewBox="0 0 7 7"><rect x=".8" y=".8" width="5.400" height="5.400" rx=".6" fill="#fbfbfc" stroke="#b3bac6" stroke-width=".7"/><path d="M2 3.500h3" stroke="#3b5b9b" stroke-width=".8"/></symbol>
<!--TBSYM--><g id="tbar" fill="none"><linearGradient id="ovg" x1="0" y1="0" x2="0" y2="1"><stop offset="0" stop-color="#f0f0f0"/><stop offset=".55" stop-color="#c4c4c4"/><stop offset="1" stop-color="#787878"/></linearGradient><path d="M358 682V698" stroke="#9a9a9a" stroke-width="1.300" stroke-dasharray="1.300 2.200"/><g transform="translate(364.0,682)"><path d="M8 1.500l5.500 6h-3v3.500h5v3.500h-8.500v-7h-3z" fill="#f2d64b" stroke="#6b5a12" stroke-width="1"/></g><path d="M385.5 682.500V698" stroke="#a9a9a9" stroke-width="1"/><g transform="translate(391.4,682)"><path d="M1.500 4.500h4l1.500 1.500h7.500v8h-13z" fill="#f2d867" stroke="#7a6820" stroke-width="1"/><path d="M2 9.500h6l-2-2.500" fill="none" stroke="#7a6820" stroke-width=".8"/><path d="M12.500 1v6M9.500 4h6" stroke="#111" stroke-width="1.800"/></g><g transform="translate(413.2,682)"><path d="M1.500 3.500h4l1.500 1.500h7.500v9h-13z" fill="#e3e3e3" stroke="#b5b5b5" stroke-width="1"/><path d="M4 8l3 3.500M7 8l-3 3.500M9 10h4" stroke="#b0b0b0" stroke-width="1"/></g><path d="M434 682.500V698" stroke="#a9a9a9" stroke-width="1"/><g transform="translate(441.4,682)"><path d="M5.500 1.500h6l3 3v8h-9z" fill="#fff" stroke="#444" stroke-width="1"/><path d="M1.500 4.500h6l3 3v7.500h-9z" fill="#dfe9f7" stroke="#444" stroke-width="1"/><path d="M3.500 8.500h5M3.500 10.500h5M3.500 12.500h5" stroke="#4a78c0" stroke-width=".9"/></g><g transform="translate(461.8,682)"><rect x="1.500" y="3" width="10" height="12" rx="1" fill="#c98a4b" stroke="#5f3b17" stroke-width="1"/><rect x="4" y="1.500" width="5" height="3" fill="#888" stroke="#333" stroke-width=".8"/><path d="M6.500 8h8.500v7.500h-8.500z" fill="#fff" stroke="#444" stroke-width="1"/><path d="M8 10.500h5.500M8 12.500h5.500" stroke="#4a78c0" stroke-width=".9"/></g><g transform="translate(483.6,682)"><path d="M3 4l10 9M13 4l-10 9" stroke="#111" stroke-width="2.600"/></g><path d="M505 682.500V698" stroke="#a9a9a9" stroke-width="1"/><g transform="translate(511.0,682)"><rect x="2" y="1.5" width="4.500" height="4" fill="#e9eef5" stroke="#555" stroke-width=".9"/><path d="M1 7.5h7" stroke="#2f6fd0" stroke-width="1.100"/><rect x="10" y="1.5" width="4.500" height="4" fill="#e9eef5" stroke="#555" stroke-width=".9"/><path d="M9 7.5h7" stroke="#2f6fd0" stroke-width="1.100"/><rect x="2" y="9.5" width="4.500" height="4" fill="#e9eef5" stroke="#555" stroke-width=".9"/><path d="M1 15.5h7" stroke="#2f6fd0" stroke-width="1.100"/><rect x="10" y="9.5" width="4.500" height="4" fill="#e9eef5" stroke="#555" stroke-width=".9"/><path d="M9 15.5h7" stroke="#2f6fd0" stroke-width="1.100"/></g><rect x="530.500" y="680.500" width="21" height="20" fill="#dcebfb" stroke="#3d94ee" stroke-width="1.200"/><g transform="translate(533.0,682)"><rect x="1" y="1.5" width="2" height="2" fill="#333"/><path d="M4 2.5h3.500" stroke="#2f6fd0" stroke-width="1.300"/><rect x="9" y="1.5" width="2" height="2" fill="#333"/><path d="M12 2.5h3.500" stroke="#2f6fd0" stroke-width="1.300"/><rect x="1" y="5.2" width="2" height="2" fill="#333"/><path d="M4 6.2h3.500" stroke="#2f6fd0" stroke-width="1.300"/><rect x="9" y="5.2" width="2" height="2" fill="#333"/><path d="M12 6.2h3.500" stroke="#2f6fd0" stroke-width="1.300"/><rect x="1" y="8.9" width="2" height="2" fill="#333"/><path d="M4 9.9h3.500" stroke="#2f6fd0" stroke-width="1.300"/><rect x="9" y="8.9" width="2" height="2" fill="#333"/><path d="M12 9.9h3.500" stroke="#2f6fd0" stroke-width="1.300"/><rect x="1" y="12.600000000000001" width="2" height="2" fill="#333"/><path d="M4 13.600000000000001h3.500" stroke="#2f6fd0" stroke-width="1.300"/><rect x="9" y="12.600000000000001" width="2" height="2" fill="#333"/><path d="M12 13.600000000000001h3.500" stroke="#2f6fd0" stroke-width="1.300"/></g><g transform="translate(554.7,682)"><path d="M1.500 3.200h14M1.500 6.200h14M1.500 9.200h14M1.500 12.200h14M1.500 15.200h14" stroke="#2f6fd0" stroke-width="1.500" stroke-dasharray="2.500 1"/><path d="M1.500 .8h14" stroke="#2f6fd0" stroke-width="1" stroke-dasharray="2.500 1"/></g><g transform="translate(576.3,682)"><rect x="1.5" y="2" width="5.500" height="5" fill="#fff" stroke="#444" stroke-width="1"/><rect x="9.5" y="2" width="5.500" height="5" fill="#fff" stroke="#444" stroke-width="1"/><rect x="1.5" y="9.5" width="5.500" height="5" fill="#fff" stroke="#444" stroke-width="1"/><rect x="9.5" y="9.5" width="5.500" height="5" fill="#fff" stroke="#444" stroke-width="1"/></g><path d="M597 682.500V698" stroke="#a9a9a9" stroke-width="1"/><g transform="translate(603.3,682)"><circle cx="7.500" cy="7.500" r="6.500" fill="#1d5fa8" stroke="#0e2f57" stroke-width="1"/><path d="M3 6c2-3 4-2 5 0s3 3 5 1" stroke="#6cc04a" stroke-width="2" fill="none"/><circle cx="7" cy="7" r="3.500" fill="#d7ecfa" stroke="#333" stroke-width="1.200"/><path d="M9.500 10l5 5" stroke="#b8742a" stroke-width="2.200"/></g><path d="M624.6 682.500V698" stroke="#a9a9a9" stroke-width="1"/><g transform="translate(631.4,682)"><rect x="1.500" y="1.500" width="13" height="12" fill="#fff" stroke="#333" stroke-width="1"/><rect x="1.500" y="1.500" width="13" height="2.500" fill="#8fb3df"/><rect x="3.500" y="5.500" width="3" height="3" fill="#f0d040" stroke="#555" stroke-width=".6"/><rect x="8" y="9" width="3" height="3" fill="#f0d040" stroke="#555" stroke-width=".6"/><path d="M5 8.500v2h3" stroke="#555" stroke-width=".7" fill="none"/><rect x="8" y="13" width="3" height="2.500" fill="#f0d040" stroke="#555" stroke-width=".6"/></g><g transform="translate(652.9,682)"><rect x="1.500" y="1.500" width="13" height="10" fill="#fff" stroke="#333" stroke-width="1"/><rect x="1.500" y="1.500" width="13" height="2.800" fill="#6f9fd8"/><path d="M3 6.500h10" stroke="#888" stroke-width="1"/><circle cx="10" cy="11.500" r="3.500" fill="#2c78c8" stroke="#123" stroke-width=".8"/><path d="M8 11c1.500-1.500 2.500 0 4-.5" stroke="#79d05a" stroke-width="1.300" fill="none"/></g><g transform="translate(674.7,682)"><rect x="1.500" y="1.500" width="13" height="12" fill="#fff" stroke="#333" stroke-width="1"/><rect x="1.500" y="1.500" width="13" height="2.500" fill="#8fb3df"/><path d="M3 8l2.500-2.500h6l2.500 2.500v6h-11z" fill="#d23c2a" stroke="#5c1a10" stroke-width=".8"/><rect x="6" y="8.500" width="4.500" height="2.500" fill="#e9c765" stroke="#5c1a10" stroke-width=".5"/></g><g transform="translate(696.3,682)"><rect x="1.500" y="2" width="13" height="11" fill="#fff" stroke="#222" stroke-width="1.200"/><rect x="1.500" y="2" width="13" height="2.500" fill="#3a6bb0"/><path d="M3.500 6.500l2 1.500-2 1.500" stroke="#111" stroke-width="1" fill="none"/></g><path d="M717.2 682.500V698" stroke="#a9a9a9" stroke-width="1"/><g transform="translate(723.7,682)"><path d="M4 4.500v8M4 8.500h8" stroke="#333" stroke-width="1"/><rect x="1.500" y="1.500" width="4" height="4" fill="#3f8be0" stroke="#1c4f94" stroke-width=".8"/><rect x="1.500" y="11" width="4" height="4" fill="#3f8be0" stroke="#1c4f94" stroke-width=".8"/><circle cx="8.500" cy="8.500" r="2" fill="#f2d34a" stroke="#7a6820" stroke-width=".7"/><rect x="11.500" y="6.500" width="4" height="4" fill="#47b84a" stroke="#1e6a21" stroke-width=".8"/></g><rect x="744.3" y="680" width="10.500" height="22.500" fill="url(#ovg)"/><path d="M747.8 695.500h4" stroke="#fff" stroke-width="1"/><path d="M747.3 697.500h5l-2.500 2.500z" fill="#fff"/><path d="M747.8 696.500h4" stroke="#000" stroke-width="1"/><path d="M747.8 698h4l-2 2z" fill="#000"/><path d="M761.7 682V698" stroke="#9a9a9a" stroke-width="1.300" stroke-dasharray="1.300 2.200"/><g transform="translate(767.4,682)"><circle cx="6.500" cy="6.500" r="4.800" fill="#ececec" stroke="#b9b9b9" stroke-width="1.300"/><path d="M4 6.500h5M6.500 4v5" stroke="#999" stroke-width="1.200"/><path d="M10 10l4.500 4.500" stroke="#b9b9b9" stroke-width="2"/></g><g transform="translate(789.0,682)"><circle cx="6.500" cy="6.500" r="4.800" fill="#ececec" stroke="#b9b9b9" stroke-width="1.300"/><path d="M4 6.500h5" stroke="#999" stroke-width="1.200"/><path d="M10 10l4.500 4.500" stroke="#b9b9b9" stroke-width="2"/></g><g transform="translate(811.2,682)"><path d="M4.500 14c-1.500-2-3-4-3-5.500 1-.5 2 .5 2.500 1.500v-6.500c.8-.8 1.500-.5 1.800 0v-1.500c.8-.8 1.700-.5 2 0v1c.8-.6 1.700-.3 2 .2v1.300c.8-.5 1.600-.2 1.900.4 0 3 .3 6-1.700 9z" fill="#efefef" stroke="#b9b9b9" stroke-width="1"/></g><g transform="translate(833.5,682)"><circle cx="8" cy="8" r="6.500" fill="#c9c9c9" stroke="#b9b9b9" stroke-width="1"/><path d="M4 6c2-2 4-1 4 1s2 3 5 2" stroke="#e4e4e4" stroke-width="2" fill="none"/></g><path d="M854.4 682.500V698" stroke="#a9a9a9" stroke-width="1"/><g transform="translate(861.0,682)"><path d="M1.500 8l6.500-5.500v3.500h6.500v4h-6.500v3.500z" fill="#c4c4c4" stroke="#b0b0b0" stroke-width=".8"/></g><g transform="translate(881.1,682)"><path d="M14.500 8l-6.500-5.500v3.500h-6.500v4h6.500v3.500z" fill="#c4c4c4" stroke="#b0b0b0" stroke-width=".8"/></g><path d="M903.2 682.500V698" stroke="#a9a9a9" stroke-width="1"/><rect x="907.500" y="680.500" width="21" height="20" fill="#dcebfb" stroke="#86b7ea" stroke-width="1.200"/><g transform="translate(909.9,682)"><circle cx="8" cy="8" r="7" fill="#bdbdbd" stroke="#a8a8a8" stroke-width="1"/><path d="M8 7v5M6.500 7h1.500M6.500 12h3" stroke="#f4f4f4" stroke-width="1.600"/><circle cx="8" cy="4.300" r="1.100" fill="#f4f4f4"/></g><path d="M931.3 682.500V698" stroke="#a9a9a9" stroke-width="1"/><g transform="translate(936.7,682)"><rect x="2" y="6" width="4.500" height="4" fill="none" stroke="#b9b9b9" stroke-width="1"/><rect x="2" y="11.500" width="4.500" height="4" fill="none" stroke="#b9b9b9" stroke-width="1"/><rect x="8.500" y="11.500" width="4.500" height="4" fill="none" stroke="#b9b9b9" stroke-width="1"/><path d="M8.500 8.500h5M11 3l1 2 2 .3-1.500 1.500.4 2" stroke="#b9b9b9" stroke-width="1" fill="none"/></g><rect x="958.5" y="680" width="10.500" height="22.500" fill="url(#ovg)"/><path d="M962.0 695.500h4" stroke="#fff" stroke-width="1"/><path d="M961.5 697.500h5l-2.500 2.500z" fill="#fff"/><path d="M962.0 696.500h4" stroke="#000" stroke-width="1"/><path d="M962.0 698h4l-2 2z" fill="#000"/></g><!--/TBSYM-->
</defs></svg>
<div class="abs" style="left:381px;top:121px;width:586px;height:12.500px;background:linear-gradient(90deg,#a8c9ee 0%,#b6d4f4 45%,#c0dbf7 100%)"></div>
<svg class="ico" style="left:381px;top:122.5px" width="10" height="10" viewBox="0 0 10 10"><circle cx="4" cy="6" r="3.300" fill="#3b7bc4"/><path d="M2 5.500c1-1.500 3-1.500 4 .5" stroke="#7fc06a" stroke-width="1.300" fill="none"/><rect x="4.500" y=".8" width="5" height="5" fill="#e8c550" stroke="#7c6a24" stroke-width=".6"/></svg>
<div class="t ac" id="ac_title" style="left:393px;top:124px;color:#111">ArcCatalog - F:\Tabriz</div>
<div class="abs" style="left:462px;top:124.5px;width:88px;height:6px;background:#9dbbe0;filter:blur(1.500px);opacity:.75"></div>
<div class="abs" style="left:381px;top:133.5px;width:586px;height:13px;background:#f6f7f9"></div>
<div class="abs" style="left:381px;top:146.5px;width:586px;height:17px;background:#f0f0f0"></div>
<div class="abs" style="left:381px;top:163.5px;width:586px;height:11px;background:#f0f0f0"></div>
<div class="abs" style="left:386.5px;top:164.5px;width:287px;height:9.500px;background:#fff"></div>
<div class="abs" style="left:381px;top:174px;width:586px;height:18px;background:#f0f0f0"></div>
<div class="t ac" id="ac_m0" style="left:391.2px;top:137px;color:#222">File</div>
<div class="t ac" id="ac_m1" style="left:410.5px;top:137px;color:#222">Edit</div>
<div class="t ac" id="ac_m2" style="left:431px;top:137px;color:#222">View</div>
<div class="t ac" id="ac_m3" style="left:454px;top:137px;color:#222">Go</div>
<div class="t ac" id="ac_m4" style="left:471.8px;top:137px;color:#222">Geoprocessing</div>
<div class="t ac" id="ac_m5" style="left:525px;top:137px;color:#222">Customize</div>
<div class="t ac" id="ac_m6" style="left:565.7px;top:137px;color:#222">Windows</div>
<div class="t ac" id="ac_m7" style="left:603px;top:137px;color:#222">Help</div>
<div class="t ac" id="ac_addr" style="left:388px;top:166px;color:#222">F:\Tabriz</div>
<div class="caret" style="left:666px;top:168px;border-left-width:2px;border-right-width:2px;border-top-width:2.500px;border-top-color:#222"></div>
<div class="abs" style="left:675px;top:167.5px;width:4.500px;height:7px;background:linear-gradient(#ddd,#555)"></div>
<div class="abs" style="left:382.5px;top:136px;width:1px;height:9px;border-left:1px dotted #999"></div>
<div class="abs" style="left:382.5px;top:150px;width:1px;height:10px;border-left:1px dotted #999"></div>
<div class="abs" style="left:382.5px;top:165px;width:1px;height:8px;border-left:1px dotted #999"></div>
<div class="abs" style="left:384px;top:178px;width:1px;height:10px;border-left:1px dotted #999"></div>
<svg class="ico" style="left:380px;top:146px" width="360" height="18" viewBox="0 0 360 18"><use href="#tbar" transform="translate(-200.900,-388.050) scale(.575)"/></svg>
<svg class="ico" style="left:444px;top:149.5px" width="11" height="11" viewBox="0 0 11 11"><rect width="11" height="11" fill="#f0f0f0"/><rect x="1.500" y="2" width="6" height="7.500" rx=".6" fill="#d9d9d9" stroke="#b5b5b5" stroke-width=".7"/><rect x="3" y="1" width="3" height="1.800" fill="#c4c4c4"/><rect x="4.500" y="5" width="5" height="4.500" fill="#ececec" stroke="#b5b5b5" stroke-width=".7"/></svg>
<svg class="ico" style="left:388.2px;top:178px" width="9" height="11" viewBox="0 0 9 11"><path d="M1 .5h5l2.500 2.500v7.500h-7.500z" fill="#fff" stroke="#7c8aa0" stroke-width=".8"/><path d="M2.500 4h4M2.500 5.500h4" stroke="#9ab" stroke-width=".6"/><rect x="2.500" y="6.500" width="4.500" height="3" fill="#222"/></svg>
<svg class="ico" style="left:401.1px;top:178px" width="9" height="11" viewBox="0 0 9 11"><path d="M1 .5h5l2.500 2.500v7.500h-7.500z" fill="#fff" stroke="#7c8aa0" stroke-width=".8"/><path d="M2.500 4h4M2.500 5.500h4" stroke="#9ab" stroke-width=".6"/><rect x="2.500" y="6.500" width="4.500" height="3" fill="#4a7fc0"/></svg>
<svg class="ico" style="left:413.4px;top:178px" width="9" height="11" viewBox="0 0 9 11"><path d="M1 .5h5l2.500 2.500v7.500h-7.500z" fill="#fff" stroke="#7c8aa0" stroke-width=".8"/><path d="M2.500 4h4M2.500 5.500h4" stroke="#9ab" stroke-width=".6"/><rect x="2.500" y="6.500" width="4.500" height="3" fill="#d9a93a"/></svg>
<div class="abs" style="left:426px;top:182px;width:4.500px;height:8px;background:linear-gradient(#ddd,#444)"></div>
<div class="abs" style="left:381px;top:191.5px;width:171px;height:11.500px;background:linear-gradient(#c9d9ee,#b4c8e2)"></div>
<div class="t ac" id="ac_ct" style="left:383px;top:194px;color:#1e3a66">Catalog Tree</div>
<svg class="ico" style="left:535px;top:193px" width="15" height="8" viewBox="0 0 15 8" fill="none" stroke="#444" stroke-width=".8"><path d="M2.500 1h2.500v3h-2.500zM1.500 4.200h4.500M3.700 4.200v3"/><path d="M10.500 1.800l3.500 3.800M14 1.800l-3.500 3.800" stroke-width="1"/></svg>
<div class="abs" style="left:381px;top:203px;width:171px;height:264px;background:#fff;border-left:1px solid #555"></div>
<div class="abs" style="left:552px;top:191.5px;width:3.500px;height:275.500px;background:#e9e9e9;border-right:1.500px solid #555;border-left:1px solid #bbb"></div>
<div class="abs" style="left:555.5px;top:191.5px;width:411.500px;height:12px;background:#f0f0f0;border-top:1px solid #8a8a8a;border-bottom:1px solid #9a9a9a"></div>
<div class="abs" style="left:556px;top:192.5px;width:30px;height:11.500px;background:#fff;border:1px solid #9a9a9a;border-bottom:none"></div>
<div class="abs" style="left:587px;top:194px;width:26px;height:9.500px;background:#f3f3f3;border:1px solid #aaa;border-bottom:none"></div>
<div class="abs" style="left:614.5px;top:194px;width:36px;height:9.500px;background:#f3f3f3;border:1px solid #aaa;border-bottom:none"></div>
<div class="t ac" id="ac_t1" style="left:558.5px;top:194px;color:#111">Contents</div>
<div class="t ac" id="ac_t2" style="left:589.5px;top:195px;color:#111">Preview</div>
<div class="t ac" id="ac_t3" style="left:617.5px;top:195px;color:#111">Description</div>
<svg class="ico" style="left:385.2px;top:204.8px" width="6" height="6"><use href="#i-minus"/></svg>
<svg class="ico" style="left:395.3px;top:203.8px" width="8.500" height="8"><use href="#i-foldc"/></svg>
<div class="t ac tr" id="tr0" style="left:406.5px;top:204.1px">Folder Connections</div>
<svg class="ico" style="left:396.0px;top:214.43px" width="6" height="6"><use href="#i-plus"/></svg>
<svg class="ico" style="left:406.0px;top:213.43px" width="8.500" height="8"><use href="#i-drv"/></svg>
<div class="t ac tr" id="tr1" style="left:417.3px;top:213.73px">D:\</div>
<svg class="ico" style="left:396.0px;top:224.07px" width="6" height="6"><use href="#i-plus"/></svg>
<svg class="ico" style="left:406.0px;top:223.07px" width="8.500" height="8"><use href="#i-drv"/></svg>
<div class="t ac tr" id="tr2" style="left:417.3px;top:223.37px">E:\</div>
<svg class="ico" style="left:396.0px;top:233.7px" width="6" height="6"><use href="#i-minus"/></svg>
<svg class="ico" style="left:406.0px;top:232.7px" width="8.500" height="8"><use href="#i-drv"/></svg>
<div class="t ac tr" id="tr3" style="left:417.3px;top:233.0px">F:\</div>
<svg class="ico" style="left:406.8px;top:243.33px" width="6" height="6"><use href="#i-plus"/></svg>
<svg class="ico" style="left:416.7px;top:242.33px" width="8.500" height="8"><use href="#i-fold"/></svg>
<div class="t ac tr" id="tr4" style="left:428.1px;top:242.63px">data</div>
<svg class="ico" style="left:406.8px;top:252.97px" width="6" height="6"><use href="#i-minus"/></svg>
<svg class="ico" style="left:416.7px;top:251.97px" width="8.500" height="8"><use href="#i-fold"/></svg>
<div class="t ac tr" id="tr5" style="left:428.1px;top:252.27px">New Folder</div>
<svg class="ico" style="left:427.4px;top:261.6px" width="8.500" height="8"><use href="#i-shp"/></svg>
<div class="t ac tr" id="tr6" style="left:438.9px;top:261.9px">Shahrestanha_Az.shp</div>
<svg class="ico" style="left:406.8px;top:272.23px" width="6" height="6"><use href="#i-minus"/></svg>
<svg class="ico" style="left:416.7px;top:271.23px" width="8.500" height="8"><use href="#i-foldo"/></svg>
<div class="t ac tr" id="tr7" style="left:428.1px;top:271.53px;background:#ececec">Tabriz</div>
<svg class="ico" style="left:417.6px;top:281.86px" width="6" height="6"><use href="#i-plus"/></svg>
<svg class="ico" style="left:427.4px;top:280.86px" width="8.500" height="8"><use href="#i-gdb"/></svg>
<div class="t ac tr" id="tr8" style="left:438.9px;top:281.16px">azarbaijan.gdb</div>
<svg class="ico" style="left:417.6px;top:291.5px" width="6" height="6"><use href="#i-plus"/></svg>
<svg class="ico" style="left:427.4px;top:290.5px" width="8.500" height="8"><use href="#i-gdb"/></svg>
<div class="t ac tr" id="tr9" style="left:438.9px;top:290.8px">Azarshahr.gdb</div>
<svg class="ico" style="left:417.6px;top:301.13px" width="6" height="6"><use href="#i-plus"/></svg>
<svg class="ico" style="left:427.4px;top:300.13px" width="8.500" height="8"><use href="#i-gdb"/></svg>
<div class="t ac tr" id="tr10" style="left:438.9px;top:300.43px">Marand.gdb</div>
<svg class="ico" style="left:417.6px;top:310.76px" width="6" height="6"><use href="#i-plus"/></svg>
<svg class="ico" style="left:427.4px;top:309.76px" width="8.500" height="8"><use href="#i-gdb"/></svg>
<div class="t ac tr" id="tr11" style="left:438.9px;top:310.06px">Tabriz.gdb</div>
<svg class="ico" style="left:427.4px;top:319.4px" width="8.500" height="8"><use href="#i-shp"/></svg>
<div class="t ac tr" id="tr12" style="left:438.9px;top:319.7px">geology.shp</div>
<svg class="ico" style="left:427.4px;top:329.03px" width="8.500" height="8"><use href="#i-shp"/></svg>
<div class="t ac tr" id="tr13" style="left:438.9px;top:329.33px">Landuse.shp</div>
<svg class="ico" style="left:427.4px;top:338.66px" width="8.500" height="8"><use href="#i-line"/></svg>
<div class="t ac tr" id="tr14" style="left:438.9px;top:338.96px">river.shp</div>
<svg class="ico" style="left:427.4px;top:348.29px" width="8.500" height="8"><use href="#i-pt"/></svg>
<div class="t ac tr" id="tr15" style="left:438.9px;top:348.59px">station.shp</div>
<svg class="ico" style="left:427.4px;top:357.93px" width="8.500" height="8"><use href="#i-shp"/></svg>
<div class="t ac tr" id="tr16" style="left:438.9px;top:358.23px">urban.shp</div>
<svg class="ico" style="left:427.4px;top:367.56px" width="8.500" height="8"><use href="#i-dbf"/></svg>
<div class="t ac tr" id="tr17" style="left:438.9px;top:367.86px">z1.dbf</div>
<svg class="ico" style="left:427.4px;top:377.19px" width="8.500" height="8"><use href="#i-dbf"/></svg>
<div class="t ac tr" id="tr18" style="left:438.9px;top:377.49px">z2.dbf</div>
<svg class="ico" style="left:406.8px;top:387.83px" width="6" height="6"><use href="#i-plus"/></svg>
<svg class="ico" style="left:416.7px;top:386.83px" width="8.500" height="8"><use href="#i-fold"/></svg>
<div class="t ac tr" id="tr19" style="left:428.1px;top:387.13px">training</div>
<svg class="ico" style="left:385.2px;top:397.46px" width="6" height="6"><use href="#i-plus"/></svg>
<svg class="ico" style="left:395.3px;top:396.46px" width="8.500" height="8"><use href="#i-tbx"/></svg>
<div class="t ac tr" id="tr20" style="left:406.5px;top:396.76px">Toolboxes</div>
<svg class="ico" style="left:385.2px;top:407.09px" width="6" height="6"><use href="#i-plus"/></svg>
<svg class="ico" style="left:395.3px;top:406.09px" width="8.500" height="8"><use href="#i-srv"/></svg>
<div class="t ac tr" id="tr21" style="left:406.5px;top:406.39px">Database Servers</div>
<svg class="ico" style="left:385.2px;top:416.73px" width="6" height="6"><use href="#i-plus"/></svg>
<svg class="ico" style="left:395.3px;top:415.73px" width="8.500" height="8"><use href="#i-srv"/></svg>
<div class="t ac tr" id="tr22" style="left:406.5px;top:416.03px">Database Connections</div>
<svg class="ico" style="left:385.2px;top:426.36px" width="6" height="6"><use href="#i-plus"/></svg>
<svg class="ico" style="left:395.3px;top:425.36px" width="8.500" height="8"><use href="#i-srv"/></svg>
<div class="t ac tr" id="tr23" style="left:406.5px;top:425.66px">GIS Servers</div>
<svg class="ico" style="left:385.2px;top:435.99px" width="6" height="6"><use href="#i-plus"/></svg>
<svg class="ico" style="left:395.3px;top:434.99px" width="8.500" height="8"><use href="#i-fold"/></svg>
<div class="t ac tr" id="tr24" style="left:406.5px;top:435.29px">My Hosted Services</div>
<svg class="ico" style="left:557px;top:206.8px" width="8.500" height="8"><use href="#i-gdb"/></svg>
<div class="t ac tr" id="ls0" style="left:567px;top:207.1px">azarbaijan.gdb</div>
<svg class="ico" style="left:557px;top:216.43px" width="8.500" height="8"><use href="#i-gdb"/></svg>
<div class="t ac tr" id="ls1" style="left:567px;top:216.73px">Azarshahr.gdb</div>
<svg class="ico" style="left:557px;top:226.07px" width="8.500" height="8"><use href="#i-gdb"/></svg>
<div class="t ac tr" id="ls2" style="left:567px;top:226.37px">Marand.gdb</div>
<svg class="ico" style="left:557px;top:235.7px" width="8.500" height="8"><use href="#i-gdb"/></svg>
<div class="t ac tr" id="ls3" style="left:567px;top:236.0px">Tabriz.gdb</div>
<svg class="ico" style="left:557px;top:245.33px" width="8.500" height="8"><use href="#i-shp"/></svg>
<div class="t ac tr" id="ls4" style="left:567px;top:245.63px">geology.shp</div>
<svg class="ico" style="left:557px;top:254.97px" width="8.500" height="8"><use href="#i-shp"/></svg>
<div class="t ac tr" id="ls5" style="left:567px;top:255.27px">Landuse.shp</div>
<svg class="ico" style="left:557px;top:264.6px" width="8.500" height="8"><use href="#i-line"/></svg>
<div class="t ac tr" id="ls6" style="left:567px;top:264.9px">river.shp</div>
<svg class="ico" style="left:557px;top:274.23px" width="8.500" height="8"><use href="#i-pt"/></svg>
<div class="t ac tr" id="ls7" style="left:567px;top:274.53px">station.shp</div>
<svg class="ico" style="left:557px;top:283.86px" width="8.500" height="8"><use href="#i-shp"/></svg>
<div class="t ac tr" id="ls8" style="left:567px;top:284.16px">urban.shp</div>
<svg class="ico" style="left:557px;top:293.5px" width="8.500" height="8"><use href="#i-dbf"/></svg>
<div class="t ac tr" id="ls9" style="left:567px;top:293.8px">z1.dbf</div>
<svg class="ico" style="left:557px;top:303.13px" width="8.500" height="8"><use href="#i-dbf"/></svg>
<div class="t ac tr" id="ls10" style="left:567px;top:303.43px">z2.dbf</div>
<svg class="ico" style="left:380px;top:118px" width="600" height="352" viewBox="0 0 600 352" fill="none" stroke-width="1.300" stroke-linecap="round"><rect x="89.2" y="28.4" width="55.4" height="16.1" rx="7" stroke="#ff0000"/><ellipse cx="166.5" cy="36.2" rx="7.5" ry="9.0" stroke="#ff0000"/><rect x="236.6" y="28.8" width="114.2" height="15.8" rx="6" stroke="#0000ff"/><ellipse cx="27.9" cy="63.2" rx="26.7" ry="10.4" stroke="#ff00ff"/><path d="M54.5 64.6L67.5 64.6M63.6 66.8L67.5 64.6L63.6 62.4" stroke="#ff00ff"/><ellipse cx="23.6" cy="79.0" rx="23.3" ry="6.4" stroke="#ff0000"/><path d="M47.0 78.6L161.5 44.0" stroke="#ff0000"/><path d="M119.4 44.5L121.6 294.2L232.0 294.2" stroke="#ff0000"/><ellipse cx="188.2" cy="79.5" rx="19.4" ry="6.9" stroke="#ff0000"/><ellipse cx="220.7" cy="80.5" rx="14.0" ry="5.9" stroke="#0000ff"/><ellipse cx="255.8" cy="80.8" rx="21.1" ry="6.0" stroke="#ff00ff"/><path d="M221.5 74.5L241.3 46.4M240.7 51.4L241.3 46.4L236.8 48.6" stroke="#0000ff"/><rect x="165.4" y="87.7" width="67.1" height="38.0" rx="6" stroke="#1e9bf0"/><path d="M232.5 114.5L318.2 115.2M312.9 118.0L318.2 115.2L313.0 112.3" stroke="#1e9bf0"/><rect x="158.8" y="127.3" width="83.6" height="46.8" rx="6" stroke="#1f8a1f"/><path d="M242.4 155.9L347.9 158.0M342.6 160.8L347.9 158.0L342.7 155.0" stroke="#1f8a1f"/><rect x="162.0" y="176.3" width="55.0" height="25.7" rx="6" stroke="#111"/><path d="M217.0 190.6L320.4 192.8M315.1 195.6L320.4 192.8L315.2 189.8" stroke="#111"/></svg>
<div class="t fa" id="an_meta" dir="rtl" style="color:#ff00ff">متا دیتا</div>
<div class="t fa" id="an_moh" dir="rtl" style="color:#ff0000">محتویات</div>
<div class="t fa" id="an_pish" dir="rtl" style="color:#0000ff">پیش نمایش</div>
<div class="t fa" id="an_tos" dir="rtl" style="color:#ff00ff">توصیفات</div>
<div class="t fa" id="an_geo" dir="rtl" style="color:#1e9bf0">ژئودیتابیس ها</div>
<div class="t fa" id="an_shp" dir="rtl" style="color:#1f8a1f">شیپ فایل ها</div>
<div class="t fa" id="an_jad" dir="rtl" style="color:#111">جداول یا تیبل ها</div>
<div class="t fa" id="an_nah" dir="rtl" style="color:#ff0000">نحوه چیدمان محتویات</div>
<div class="t" id="an_cont" style="color:#ff0000;font-weight:bold">(contents)</div>
<div class="t fa" id="an_head" dir="rtl" style="color:#f00000">منوی استاندارد</div>
<svg class="ico" style="left:351.5px;top:524px" width="624" height="27" viewBox="351.500 676 624 27"><rect x="351.500" y="676" width="624" height="27" fill="#f0f0f0"/><use href="#tbar"/></svg>
<!--ENDDOC-->
</div>
<div id="vscroll">
  <div class="abs" style="left:0;top:2px;width:18px;height:15px;background:#fff;border:1px solid #ababab"></div>
  <div class="abs" style="left:4px;top:7px;width:0;height:0;border-left:3.500px solid transparent;border-right:3.500px solid transparent;border-bottom:4px solid #6e6e6e"></div>
  <div class="abs" style="left:0;top:54px;width:18px;height:17px;background:#fff;border:1px solid #ababab"></div>
  <div class="abs" style="left:0;top:537px;width:18px;height:15px;background:#fff;border:1px solid #ababab"></div>
  <div class="abs" style="left:4px;top:543.500px;width:0;height:0;border-left:3.500px solid transparent;border-right:3.500px solid transparent;border-top:4px solid #6e6e6e"></div>
</div>
<div id="status">
  <div class="abs" style="left:1112px;top:0;width:38px;height:6px;background:#c8c8c8"></div>
  <svg class="ico" style="left:180px;top:0" width="30" height="6" viewBox="0 0 30 6" fill="none" stroke="#5a5a5a" stroke-width="1"><path d="M6 5.500v-1.500h5.500l1.500 1 1.500-1h5.500v1.500"/></svg>
  <svg class="ico" style="left:1080px;top:0" width="200" height="6" viewBox="1080 0 200 6" fill="none" stroke="#5a5a5a" stroke-width="1"><path d="M1085.500 5.500v-1.500h5.500l1.500 1 1.500-1h5.500v1.500"/><path d="M1124.500 5.500v-2h13v2"/><path d="M1162.500 5.500v-2h12v2"/><path d="M1252.500 5.500v-2"/><path d="M1251 3h3" stroke-width="1.500"/></svg>
</div>
</body>
</html>
